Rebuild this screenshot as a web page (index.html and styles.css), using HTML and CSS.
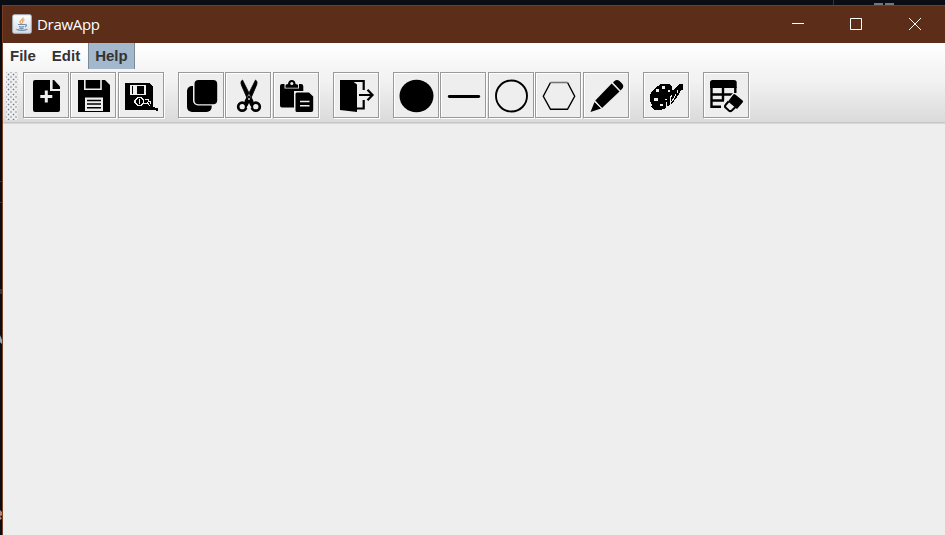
FILE: index.html
```
<!DOCTYPE html>
<html lang="en">
<head>
<meta charset="utf-8">
<title>DrawApp</title>
<link rel="stylesheet" href="styles.css">
</head>
<body>
<div class="desktop">
  <i class="speck s1"></i><i class="speck s2"></i><i class="speck s3"></i><i class="speck s4"></i><i class="speck s5"></i><i class="speck s6"></i><i class="speck s7"></i>
  <main class="window">
    <header class="titlebar">
      <svg class="logo" width="20" height="20" viewBox="0 0 20 20">
        <defs><linearGradient id="tile" x2="0" y2="1"><stop stop-color="#fff"/><stop offset="1" stop-color="#d5dce3"/></linearGradient></defs>
        <rect x=".7" y=".7" width="18.6" height="18.6" rx="1.5" fill="url(#tile)" stroke="#a9b9c8" stroke-width="1"/>
        <path d="M11 3.500Q11.500 5 9 6.500T10 10M12.500 5.500Q9.500 7 11 9" fill="none" stroke="#e0a566" stroke-width="1.300"/>
        <path d="M6 10.500h7M7 12.500q2.500 1 5 0M7.500 14.200q2 .8 4 0M13 10.500q3 0 0 2.500M4.500 15.200q5 2.300 11 0" fill="none" stroke="#6f8dab" stroke-width="1.200"/>
      </svg>
      <span class="title">DrawApp</span>
      <nav class="controls">
        <svg width="58" height="38" viewBox="0 0 58 38"><path d="M23 18.500h12"/></svg>
        <svg width="59" height="38" viewBox="0 0 59 38"><path d="M23.500 13.500h11v11h-11z"/></svg>
        <svg width="59" height="38" viewBox="0 0 59 38"><path d="M23 13l12 12M35 13L23 25"/></svg>
      </nav>
    </header>
    <div class="bars">
      <nav class="menubar"><span>File</span><span>Edit</span><span class="active">Help</span></nav>
      <div class="toolbar">
        <div class="grip"></div>
        <div class="group">
          <button><svg viewBox="1 1 44 44"><path d="M12 8H27V19H37V38q0 2-2 2H12q-2 0-2-2V10q0-2 2-2z"/><path d="M29.500 8h1.500l6 6.500V17h-7.500z"/><path class="w" d="M28.500 8V17.700H37" stroke-width="1.500"/><path class="w" d="M23.300 18.500v12M17.300 24.500h12" stroke-width="3"/></svg></button>
          <button><svg viewBox="1 1 44 44"><path d="M8 8H35l5 5V40H8z"/><path class="w" d="M14.800 8V17.300H31V8" stroke-width="1.600"/><path class="wf" d="M15 25.500h18V39H15z"/><path class="k" d="M17 28.500h14M17 32h14M17 35.700h14" stroke-width="1.500"/></svg></button>
          <button><svg viewBox="1 1 44 44" shape-rendering="crispEdges"><path d="M7 11H31l4 4V38H7z"/><path class="wf" d="M12 13h16v10H12z"/><path d="M14 14h1v8h-1zM19 14h7v8h-7z"/><circle class="w" cx="21.500" cy="29.500" r="4" stroke-width="1.200"/><path class="w" d="M21.500 27v5M16 28v3M27 27h3v2h2v3M26 31l3 1M29 30l2 3 3 1" stroke-width="1"/><path class="k" d="M32 32l3 4 5 2" stroke-width="2.600"/></svg></button>
        </div>
        <div class="group">
          <button><svg viewBox="1 1 44 44"><rect x="9" y="14" width="24.700" height="26" rx="5"/><rect x="15" y="6.500" width="25.500" height="27" rx="5" fill="#eee"/><rect x="16.500" y="8" width="22.700" height="24.300" rx="4"/></svg></button>
          <button><svg viewBox="1 1 44 44"><path d="M17.500 8Q14.800 9.500 16.800 14L22 26l3 3h3l-4-8zM30.500 8Q33.200 9.500 31.200 14L26 26l-3 3h-3l4-8z" stroke="#000" stroke-width=".8"/><circle class="k" cx="17.200" cy="34.700" r="4" stroke-width="2.700"/><circle class="k" cx="30.800" cy="34.700" r="4" stroke-width="2.700"/><path d="M18.500 31l5.500-8 5.500 8-2 3h-7z"/><path d="M24 31l2.500 5h-5z" fill="#eee"/><circle cx="24" cy="27" r=".9" fill="#eee"/></svg></button>
          <button><svg viewBox="1 1 44 44"><path d="M9 12H28q2.300 0 2.300 2.300V19H21V35.500H9q-2 0-2-2V14q0-2 2-2z"/><path class="wf" d="M11.500 11h14.500v5.500H11.500z"/><path d="M12.500 15.800v-2.300q0-1.500 2.500-1.500Q15.500 8 18.800 8t3.800 4q2.500 0 2.500 1.500v2.300z"/><circle cx="18.800" cy="11.500" r="1.500" fill="#eee"/><path d="M24 20.500H36l4.200 4V38q0 2-2 2H24q-1.500 0-1.500-1.500V22q0-1.500 1.500-1.500z"/><path class="w" d="M27 29.500h9.500M27 33.700h9.500" stroke-width="1.500"/></svg></button>
        </div>
        <div class="group">
          <button><svg viewBox="1 1 44 44"><path d="M7 8H18l6 4.500V40L7 38z"/><path class="k" d="M8 9H30.700V18M30.700 28v8.500H23" stroke-width="2.200"/><path class="k" d="M26 23H39M34.500 17.800l5 5.200-5 5.200" stroke-width="2.200"/></svg></button>
        </div>
        <div class="group">
          <button><svg viewBox="1 1 44 44"><ellipse cx="23.500" cy="24" rx="17" ry="16.200"/></svg></button>
          <button><svg viewBox="1 1 44 44"><path class="k" d="M9.300 24.500H38.700" stroke-width="2.900" stroke-linecap="round"/></svg></button>
          <button><svg viewBox="1 1 44 44"><circle class="k" cx="23.500" cy="24" r="15.500" stroke-width="1.900"/></svg></button>
          <button><svg viewBox="1 1 44 44"><path class="k" d="M15.500 10.500L8.300 24.300l7.200 13h17l7.200-13-7.200-13.800" stroke-width="1.400"/><path d="M15.500 10.500h17" stroke="#777" stroke-width="1.600"/></svg></button>
          <button><svg viewBox="1 1 44 44"><path d="M12.300 28.500L28.700 11.500l7.800 8L19 36zM11.500 30l6.500 6.500-10.500 3.500zM30 10.500l1.500-1.500q2.500-1.800 5 0l2.300 2.200q2.500 2.500.8 5l-2 2.300z"/><path class="w" d="M29 11l8 8M11.800 29.500l6.800 6.800" stroke-width="1"/></svg></button>
        </div>
        <div class="group">
          <button><svg viewBox="1 1 44 44" shape-rendering="crispEdges"><path d="M17 12h9l3 3v3h2l3-4 3-2h3v6h-2l-2 4-2 3-3 4-4 4-3 1v-4h-1v5l-2 2h-2v1h-7l-2-1-2-3H9l-1-4H7v-7l2-4 3-3 3-2z"/><path class="wf" d="M19 14h3v3h-3zM13 17h3v3h-3zM25 18h2v2h-2zM11 26h4v3h-4zM17 32h3v2h-3zM22 27h2v1h-2z"/><path class="w" d="M34 18v3M29 23l-2 3v4M33 22l-2 4-2 2M31 27l-3 3-1 3" stroke-width="1"/></svg></button>
        </div>
        <div class="group">
          <button><svg viewBox="1 1 44 44"><path d="M9.500 8H31q2.700 0 2.700 2.500V16H7v-5.500Q7 8 9.500 8z"/><path class="k" d="M8.500 14V34.700H18M8 22.500H31M8 28.500H21M20 15v13.500M32.300 15v6" stroke-width="2.400"/><path d="M30.500 20.500L41 28.500 30 41H25L19.500 36v-3z" fill="#eee"/><path d="M30.300 22.500q1-1 2 0l7.300 6q1 1 0 2L34 37l-9-7.500z"/><path class="k" d="M25.500 29.500l-3 3.500q-1.200 1.500.3 2.800l3 2.700q1.500 1.200 3 0L33 34.500" stroke-width="2"/></svg></button>
        </div>
      </div>
    </div>
    <section class="canvas"></section>
  </main>
</div>
</body>
</html>
```
FILE: styles.css
```
* { box-sizing: border-box; }
body { margin: 0; overflow: hidden; }
.desktop {
  position: relative;
  height: 535px;
  padding: 5px 0 0 2px;
  background: #0b0d14;
}
.speck { position: absolute; left: 0; width: 2px; height: 1px; background: #30343d; }
.s1 { top: 181px; }
.s2 { top: 202px; }
.s3 { top: 289px; height: 5px; }
.s4 { top: 335px; height: 9px; background: #8eaab8; clip-path: polygon(0 0, 100% 50%, 100% 100%, 0 80%); }
.s5 { top: 510px; height: 10px; background: #b98270; clip-path: polygon(0 0, 100% 20%, 100% 55%, 0 60%, 100% 85%, 0 100%); }
.s6 { left: 833px; top: 0; width: 1px; height: 5px; }
.s7 { left: 874px; top: 3px; width: 20px; height: 2px; background: linear-gradient(90deg, #777 9px, transparent 9px 11px, #777 11px); }
.window {
  display: flex;
  flex-direction: column;
  height: 530px;
  border-left: 1px solid #793f25;
  background: #eee;
}
.titlebar {
  display: flex;
  align-items: center;
  flex: none;
  height: 38px;
  padding: 0 0 2px 9px;
  border-top: 1px solid #6d402c;
  background: #5c2e1a;
}
.title {
  margin-left: 5px;
  color: #fff;
  font: 15px/20px "Open Sans", "Noto Sans", sans-serif;
  letter-spacing: -.3px;
}
.controls { display: flex; margin-left: auto; }
.controls svg { display: block; fill: none; stroke: #fff; stroke-width: 1; }
.bars {
  flex: none;
  height: 81px;
  border-bottom: 1px solid #d8d8d8;
  background: linear-gradient(#fff, #f5f5f5 26px, #f2f2f2 38px, #dadada 79px);
}
.menubar {
  display: flex;
  height: 26px;
  color: #333;
  font: bold 15px/26px "Liberation Sans", Arial, sans-serif;
}
.menubar span { padding: 0 7px; }
.menubar span + span { padding-left: 9px; }
.menubar .active {
  width: 47px;
  margin-left: 1px;
  padding: 0 0 0 6px !important;
  border-left: 1px solid #7a8a99;
  border-right: 1px solid #7a8a99;
  background: #a3b8cc;
}
.toolbar {
  display: flex;
  align-items: flex-start;
  gap: 12.5px;
  height: 54px;
  padding: 3px 0 0 3px;
  border-bottom: 1px solid #c6c6c6;
}
.grip {
  width: 12px;
  height: 48px;
  margin-right: -7.5px;
  background-color: #f4f4f4;
  background-image: radial-gradient(circle, #6f7a86 .8px, transparent 1.1px), radial-gradient(circle, #6f7a86 .8px, transparent 1.1px);
  background-size: 5px 5px;
  background-position: 0 0, 2.5px 2.5px;
}
.group { display: flex; gap: 1.4px; margin-right: 1.5px; }
.group:nth-child(2), .group:nth-child(3) { margin-right: 1.7px; }
.group:nth-child(5) { margin-right: 1.9px; }
.group button {
  flex: none;
  width: 46px;
  height: 46px;
  padding: 0;
  border: 1px solid #999;
  background: #eee;
  box-shadow: 1px 1px #fff, inset 1px 1px #fff;
}
.group svg { display: block; width: 44px; height: 44px; }
.k { fill: none; stroke: #000; }
.w { fill: none; stroke: #eee; }
.wf { fill: #eee; }
.canvas { flex: 1; }
```
